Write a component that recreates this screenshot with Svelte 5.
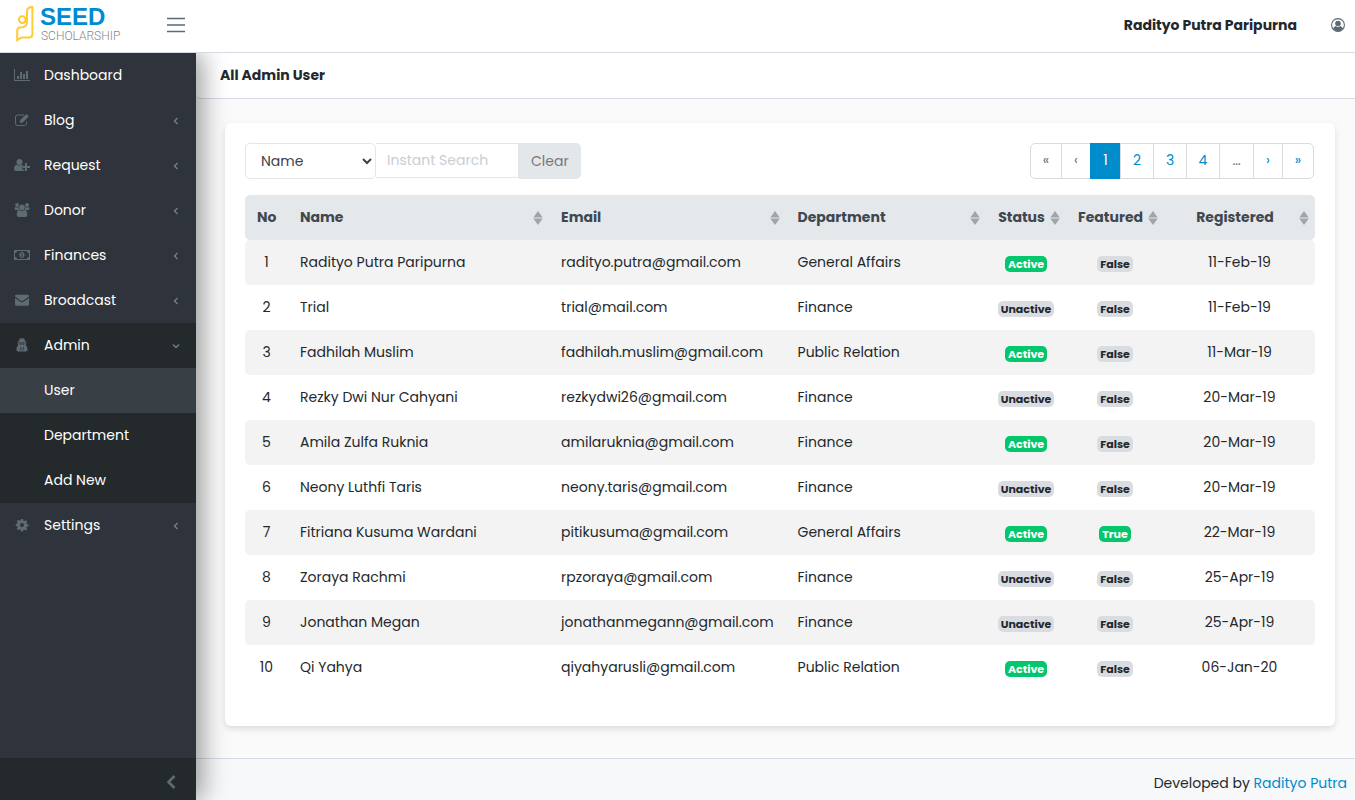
<script lang="ts">
  type NavItem = {
    label: string;
    icon: string;
    children?: string[];
  };

  const navItems: NavItem[] = [
    { label: "Dashboard", icon: "chart" },
    { label: "Blog", icon: "edit", children: [] },
    { label: "Request", icon: "userPlus", children: [] },
    { label: "Donor", icon: "group", children: [] },
    { label: "Finances", icon: "money", children: [] },
    { label: "Broadcast", icon: "mail", children: [] },
    { label: "Admin", icon: "secret", children: ["User", "Department", "Add New"] },
    { label: "Settings", icon: "cog", children: [] },
  ];

  const columns = [
    { key: "name", label: "Name" },
    { key: "email", label: "Email" },
    { key: "department", label: "Department" },
    { key: "status", label: "Status" },
    { key: "featured", label: "Featured" },
    { key: "registered", label: "Registered" },
  ];

  const users = [
    { no: 1, name: "Radityo Putra Paripurna", email: "radityo.putra@gmail.com", department: "General Affairs", active: true, featured: false, registered: "11-Feb-19" },
    { no: 2, name: "Trial", email: "trial@mail.com", department: "Finance", active: false, featured: false, registered: "11-Feb-19" },
    { no: 3, name: "Fadhilah Muslim", email: "fadhilah.muslim@gmail.com", department: "Public Relation", active: true, featured: false, registered: "11-Mar-19" },
    { no: 4, name: "Rezky Dwi Nur Cahyani", email: "rezkydwi26@gmail.com", department: "Finance", active: false, featured: false, registered: "20-Mar-19" },
    { no: 5, name: "Amila Zulfa Ruknia", email: "amilaruknia@gmail.com", department: "Finance", active: true, featured: false, registered: "20-Mar-19" },
    { no: 6, name: "Neony Luthfi Taris", email: "neony.taris@gmail.com", department: "Finance", active: false, featured: false, registered: "20-Mar-19" },
    { no: 7, name: "Fitriana Kusuma Wardani", email: "pitikusuma@gmail.com", department: "General Affairs", active: true, featured: true, registered: "22-Mar-19" },
    { no: 8, name: "Zoraya Rachmi", email: "rpzoraya@gmail.com", department: "Finance", active: false, featured: false, registered: "25-Apr-19" },
    { no: 9, name: "Jonathan Megan", email: "jonathanmegann@gmail.com", department: "Finance", active: false, featured: false, registered: "25-Apr-19" },
    { no: 10, name: "Qi Yahya", email: "qiyahyarusli@gmail.com", department: "Public Relation", active: true, featured: false, registered: "06-Jan-20" },
  ];

  let openGroup = $state("Admin");
  let activePage = $state(1);
  let searchField = $state("name");
  let search = $state("");

  let visibleUsers = $derived(
    users.filter((u) =>
      String(u[searchField as keyof typeof u]).toLowerCase().includes(search.toLowerCase())
    )
  );

  function toggleGroup(label: string) {
    openGroup = openGroup === label ? "" : label;
  }
</script>

{#snippet navIcon(name: string)}
  <svg class="nav-icon" viewBox="0 0 16 14" aria-hidden="true">
    {#if name === "chart"}
      <path d="M0 1h1v11h15v1H0zM3 8h2v3H3zM6 4h2v7H6zM9 6h2v5H9zM12 3h2v8h-2z" />
    {:else if name === "edit"}
      <path d="M12.500 8.500V10.500a2 2 0 0 1-2 2H3.500a2 2 0 0 1-2-2V4a2 2 0 0 1 2-2H10" fill="none" stroke="currentColor" />
      <path d="M6 7.300 12.300 1l2.500 2.500L8.500 9.800H6z" />
    {:else if name === "userPlus"}
      <circle cx="5.500" cy="4" r="3" />
      <path d="M2.500 6.500Q0 7.500 0 11q0 2 2 2h7q1.600 0 1.800-1.500H8.500V8.300H9Q8.800 7 8 6.500 5.500 8.500 2.500 6.500z" />
      <path d="M11 5h2v3h3v2h-3v3h-2v-3H9V8h2z" />
    {:else if name === "group"}
      <circle cx="3" cy="2" r="1.900" />
      <circle cx="13" cy="2" r="1.900" />
      <circle cx="8" cy="4.200" r="2.800" />
      <path d="M1.200 4Q3 5.200 4.600 4 4.500 6 5.500 7H2Q.5 7 .5 5.800 .6 4.500 1.200 4zM14.800 4Q13 5.200 11.400 4q.1 2-.9 3H14q1.500 0 1.500-1.200Q15.400 4.500 14.800 4zM5.200 6.800Q8 9 10.800 6.800 13.300 7.800 13.300 12q0 2-2 2H4.700q-2 0-2-2 0-4.200 2.500-5.200z" />
    {:else if name === "money"}
      <path fill-rule="evenodd" d="M0 2h16v10H0zM3 3Q3 5 1 5v4q2 0 2 2h10q0-2 2-2V5q-2 0-2-2z" />
      <path fill-rule="evenodd" d="M8 4c3.400 0 3.400 6 0 6s-3.400-6 0-6zm-1 1.500V6h.500v2H7v.7h2V8h-.500V5.200H8z" />
    {:else if name === "mail"}
      <path d="M1 3.500V3q0-1.300 1.300-1.300h11.400Q15 1.700 15 3v.5L9.500 7.600Q8 8.600 6.500 7.600zM1 5l5 3.600q2 1.300 4 0L15 5v6.500q0 1.300-1.300 1.300H2.300Q1 12.800 1 11.500z" />
    {:else if name === "secret"}
      <path d="M4.800 3.200 5.600 1Q6.300-.2 8 .6 9.700-.2 10.400 1l.8 2.200 1.500.5v.9H3.300v-.9z" />
      <path fill-rule="evenodd" d="M3.800 5h8.400l-.4 2.200Q13.600 8.500 13.600 11.700q0 1.800-2 1.800H4.400q-2 0-2-1.800 0-3.200 1.800-4.500zM5.200 5.500q.3 1.200 1.500 1.200Q7.700 6.700 7.700 5.700h.6q0 1 1 1 1.200 0 1.500-1.200zM6 8.500l.8 4h.6l-.2-2.500zm4 0-1.200 1.500-.2 2.500h.6z" />
    {:else if name === "cog"}
      <path fill-rule="evenodd" d="M7 1h2l.4 1.700 1 .4 1.500-.9 1.400 1.400-.9 1.500.4 1 1.700.4v1.800l-1.700.4-.4 1 .9 1.500-1.400 1.400-1.500-.9-1 .4L9 13.500H7l-.4-1.800-1-.4-1.500.9-1.400-1.400.9-1.500-.4-1L1.700 7.900V6.100l1.500-.4.4-1-.9-1.500 1.400-1.400 1.500.9 1-.4zM8 5a2 2 0 1 0 0 4 2 2 0 0 0 0-4z" />
    {/if}
  </svg>
{/snippet}

<div class="app">
  <header class="topbar">
    <a class="brand" href="#home" aria-label="Seed Scholarship">
      <svg width="126" height="44" viewBox="0 0 126 44">
        <g fill="none" stroke="#fc3" stroke-width="2">
          <path d="M27 18.500V8.500Q27 4 32.400 4V31q0 3.500-3.400 3.500H21.500L17.200 37.200V27.500q0-3 3-3Q27 24.500 27 18.500" />
          <circle cx="22.300" cy="16.600" r="3.400" />
        </g>
        <text class="brand-seed" x="40" y="22">SEED</text>
        <text class="brand-sub" x="41" y="37">SCHOLARSHIP</text>
      </svg>
    </a>
    <button class="menu-toggle" aria-label="Toggle sidebar">
      <svg width="18" height="16" viewBox="0 0 18 16">
        <path d="M0 1.500h18M0 8h18M0 14.500h18" stroke="currentColor" stroke-width="1.600" />
      </svg>
    </button>
    <span class="account-name">Radityo Putra Paripurna</span>
    <button class="account" aria-label="Account">
      <svg width="14" height="14" viewBox="0 0 14 14">
        <circle cx="7" cy="7" r="6.400" fill="none" stroke="currentColor" stroke-width="1.100" />
        <circle cx="7" cy="5.500" r="2.800" fill="currentColor" />
        <path d="M2 10.500Q3 8.500 4.600 8 7 9.800 9.400 8q1.600.5 2.600 2.500Q10 13.300 7 13.300T2 10.500z" fill="currentColor" />
      </svg>
    </button>
  </header>

  <div class="body">
    <aside class="sidebar">
      <nav>
        {#each navItems as item}
          <div class="nav-group" class:open={item.children && openGroup === item.label}>
            <button class="nav-link" onclick={() => toggleGroup(item.label)}>
              {@render navIcon(item.icon)}
              <span>{item.label}</span>
              {#if item.children}
                <svg class="caret" width="8" height="8" viewBox="0 0 8 8">
                  <path d="M5.500 1 2.500 4l3 3" fill="none" stroke="currentColor" stroke-width="1.300" />
                </svg>
              {/if}
            </button>
            {#if openGroup === item.label}
              {#each item.children ?? [] as child}
                <a class="sub-link" class:current={child === "User"} href="#{child}">{child}</a>
              {/each}
            {/if}
          </div>
        {/each}
      </nav>
      <button class="minimizer" aria-label="Minimize sidebar">
        <svg width="10" height="14" viewBox="0 0 10 14">
          <path d="M8.500 1 2.500 7l6 6" fill="none" stroke="currentColor" stroke-width="2.600" />
        </svg>
      </button>
    </aside>

    <div class="content">
      <h1 class="page-title">All Admin User</h1>

      <main>
        <section class="card">
          <div class="toolbar">
            <div class="search">
              <select bind:value={searchField} aria-label="Search by">
                <option value="name">Name</option>
                <option value="email">Email</option>
                <option value="department">Department</option>
              </select>
              <input type="text" placeholder="Instant Search" aria-label="Instant Search" bind:value={search} />
              <button onclick={() => (search = "")}>Clear</button>
            </div>
            <div class="pagination">
              <button class="double" disabled>«</button>
              <button class="single" disabled>‹</button>
              {#each [1, 2, 3, 4] as page}
                <button class:active={page === activePage} onclick={() => (activePage = page)}>{page}</button>
              {/each}
              <button class="more" disabled>…</button>
              <button class="single">›</button>
              <button class="double">»</button>
            </div>
          </div>

          <table>
            <thead>
              <tr>
                <th class="no">No</th>
                {#each columns as column}
                  <th class={column.key}>
                    {column.label}
                    <svg class="sort" width="10" height="14" viewBox="0 0 10 14">
                      <path d="M5 0l4.700 6.400H.3zM5 14l4.700-6.400H.3z" fill="currentColor" />
                    </svg>
                  </th>
                {/each}
              </tr>
            </thead>
            <tbody>
              {#each visibleUsers as user (user.no)}
                <tr>
                  <td class="no">{user.no}</td>
                  <td>{user.name}</td>
                  <td>{user.email}</td>
                  <td>{user.department}</td>
                  <td class="status">
                    <span class="badge" class:on={user.active}>{user.active ? "Active" : "Unactive"}</span>
                  </td>
                  <td class="featured">
                    <span class="badge" class:on={user.featured}>{user.featured ? "True" : "False"}</span>
                  </td>
                  <td class="registered">{user.registered}</td>
                </tr>
              {/each}
            </tbody>
          </table>
        </section>
      </main>

      <footer>
        <span>Developed by <a href="#author">Radityo Putra</a></span>
      </footer>
    </div>
  </div>
</div>

<style>
  :global(body) {
    margin: 0;
  }

  .app {
    display: flex;
    flex-direction: column;
    min-height: 100vh;
    font-family: Poppins, Inter, "Open Sans", sans-serif;
    font-size: 14px;
    line-height: 21px;
    color: #23282c;
    background-color: #fafafa;
  }

  .app *,
  .app {
    box-sizing: border-box;
  }

  button,
  select,
  input {
    margin: 0;
    padding: 0;
    border: 0;
    font: inherit;
  }

  button {
    background: none;
    color: inherit;
    cursor: pointer;
  }

  button:disabled {
    cursor: default;
  }

  a {
    color: #008bcb;
    text-decoration: none;
  }

  svg {
    display: block;
    flex-shrink: 0;
  }

  /* top bar */
  .topbar {
    position: relative;
    z-index: 2;
    display: flex;
    align-items: center;
    height: 53px;
    padding: 0 10px 2px 0;
    border-bottom: 1px solid #d3dae2;
    background-color: #fff;
  }

  .brand {
    margin-right: 41px;
  }

  .brand-seed {
    font-family: "Liberation Sans", Arial, sans-serif;
    font-size: 24px;
    font-weight: 700;
    fill: #008ad1;
  }

  .brand-sub {
    font-family: Roboto, sans-serif;
    font-size: 12px;
    font-weight: 300;
    fill: #888;
  }

  .menu-toggle,
  .account {
    color: #5c6873;
  }

  .account-name {
    margin: 0 34px 0 auto;
    font-weight: 700;
  }

  /* sidebar */
  .body {
    display: flex;
    flex: 1;
  }

  .sidebar {
    position: relative;
    z-index: 1;
    display: flex;
    flex-direction: column;
    flex-shrink: 0;
    width: 196px;
    background-color: #2f333b;
    box-shadow: 6px 0 24px rgba(0, 0, 0, 0.4);
    color: #fff;
  }

  nav {
    flex: 1;
  }

  .nav-group.open {
    background-color: #24292c;
  }

  .nav-link {
    display: flex;
    align-items: center;
    gap: 14px;
    width: 100%;
    height: 45px;
    padding: 0 16px 0 14px;
    text-align: left;
  }

  .nav-icon {
    width: 16px;
    height: 14px;
    margin-bottom: 2px;
    color: #5f6b72;
    fill: currentColor;
  }

  .caret {
    margin-left: auto;
    color: #73818f;
  }

  .open .caret {
    transform: rotate(-90deg);
  }

  .sub-link {
    display: block;
    padding: 12px 16px 12px 44px;
    color: #fff;
  }

  .sub-link.current {
    background-color: #383f45;
  }

  .minimizer {
    display: flex;
    justify-content: flex-end;
    height: 42px;
    padding: 17px 20px 0;
    background-color: #24292c;
    color: #5f6b72;
  }

  /* content */
  .content {
    display: flex;
    flex-direction: column;
    flex: 1;
    min-width: 0;
  }

  .page-title {
    margin: 0;
    padding: 12px 24px;
    border-bottom: 1px solid #d3dae2;
    border-radius: 0 0 0 5px;
    background-color: #fff;
    font-size: 14px;
    font-weight: 700;
  }

  main {
    flex: 1;
    padding: 24px 20px 32px 29px;
  }

  .card {
    padding: 20px 20px 36px;
    border-radius: 6px;
    background-color: #fff;
    box-shadow: 0 3px 6px rgba(0, 0, 0, 0.12);
  }

  .toolbar {
    display: flex;
    justify-content: space-between;
    margin-bottom: 16px;
  }

  .search {
    display: flex;
  }

  .search select {
    width: 131px;
    height: 36px;
    padding: 0 0 0 11px;
    border: 1px solid #e4e7ea;
    border-radius: 5px;
    background-color: #fff;
    color: #3c4248;
  }

  .search input {
    width: 143px;
    height: 35px;
    padding: 0 11px;
    border: 1px solid #e4e7ea;
    border-left: 0;
    color: #3c4248;
  }

  .search input::placeholder {
    color: #c8ced3;
  }

  .search button {
    height: 36px;
    padding: 0 12px;
    border-radius: 0 5px 5px 0;
    background-color: #e4e7ea;
    color: #74787c;
  }

  .pagination {
    display: flex;
    padding-right: 1px;
  }

  .pagination button {
    width: 34px;
    height: 36px;
    padding-bottom: 2px;
    margin-left: -1px;
    border: 1px solid #d8dbdf;
    background-color: #fff;
    color: #008bcb;
  }

  .pagination .single {
    width: 30px;
  }

  .pagination .double {
    width: 32px;
  }

  .pagination .more {
    width: 35px;
  }

  .pagination button:disabled {
    color: #6b7378;
  }

  .pagination button:first-child {
    border-radius: 5px 0 0 5px;
  }

  .pagination button:last-child {
    border-radius: 0 5px 5px 0;
  }

  .pagination .active {
    width: 31px;
    border-color: #008bcb;
    background-color: #008bcb;
    color: #fff;
  }

  /* table */
  table {
    width: 100%;
    table-layout: fixed;
    border-spacing: 0;
  }

  th,
  td {
    height: 45px;
    padding: 0 12px;
    text-align: left;
    white-space: nowrap;
  }

  th {
    position: relative;
    padding-right: 21px;
    background-color: #e4e8eb;
    color: #40474e;
    font-weight: 700;
  }

  th.no {
    width: 43px;
    padding-right: 12px;
  }

  th.name {
    width: 24.4%;
  }

  th.email {
    width: 22.1%;
  }

  th.status {
    width: 80px;
  }

  th.featured {
    width: 98px;
  }

  th.registered {
    width: 151px;
  }

  .no,
  .status,
  .featured,
  .registered {
    text-align: center;
  }

  td.no {
    padding: 0;
  }

  td.status,
  td.featured {
    padding: 2px 0 0;
  }

  .sort {
    position: absolute;
    top: 16px;
    right: 6px;
    color: #a0a5a8;
  }

  tbody tr:nth-child(odd) td {
    background-color: #f3f3f3;
  }

  th:first-child,
  td:first-child {
    border-radius: 5px 0 0 5px;
  }

  th:last-child,
  td:last-child {
    border-radius: 0 5px 5px 0;
  }

  .badge {
    display: inline-block;
    padding: 0 3px;
    border-radius: 5px;
    background-color: #d9dde1;
    font-size: 11px;
    font-weight: 700;
    line-height: 16px;
  }

  .badge.on {
    background-color: #04c66c;
    color: #fff;
  }

  footer {
    display: flex;
    justify-content: flex-end;
    height: 42px;
    padding: 14px 8px 0;
    border-top: 1px solid #d3dae2;
    background-color: #f6f8fa;
  }
</style>
